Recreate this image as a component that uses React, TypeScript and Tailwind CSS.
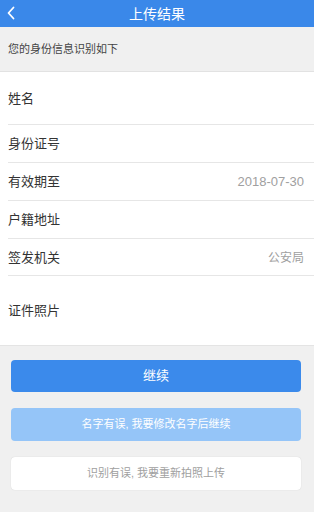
const rows: { label: string; value?: string; h: string }[] = [
  { label: '姓名', h: 'h-[53px]' },
  { label: '身份证号', h: 'h-[38px]' },
  { label: '有效期至', value: '2018-07-30', h: 'h-[38px]' },
  { label: '户籍地址', h: 'h-[38px]' },
  { label: '签发机关', value: '公安局', h: 'h-[37px]' },
  { label: '证件照片', h: 'h-[69px]' },
]

export default function App() {
  return (
    <div
      className="h-[512px] w-full flex flex-col overflow-hidden bg-[#f0f0f0]"
      style={{ fontFamily: '"Liberation Sans", "Noto Sans CJK SC", sans-serif' }}
    >
      {/* 顶部导航 */}
      <div className="h-[27px] flex-shrink-0 bg-[#3a88e9] relative flex items-center justify-center">
        <svg
          className="absolute left-[6px] top-[6px]"
          width="10"
          height="14"
          viewBox="0 0 10 14"
          fill="none"
        >
          <path d="M7.5 1.5L2.5 7l5 5.5" stroke="#fff" strokeWidth="1.8" strokeLinecap="round" strokeLinejoin="round" />
        </svg>
        <span className="text-white text-[14px] leading-none">上传结果</span>
      </div>

      {/* 提示 */}
      <div className="h-[45px] flex-shrink-0 flex items-center px-[8px] text-[11px] text-[#444] border-b border-[#e2e2e2]">
        您的身份信息识别如下
      </div>

      {/* 信息列表 */}
      <div className="bg-white flex-shrink-0">
        {rows.map((r, i) => (
          <div key={r.label} className="pl-[8px]">
            <div
              className={`${r.h} flex items-center justify-between pr-[10px] pt-[1px] ${
                i < rows.length - 1 ? 'border-b border-[#e6e6e6]' : ''
              }`}
            >
              <span className="text-[13px] text-[#333]">{r.label}</span>
              {r.value && (
                <span className={`${r.value === '公安局' ? 'text-[12px]' : 'text-[13px]'} text-[#a0a0a0]`}>
                  {r.value}
                </span>
              )}
            </div>
          </div>
        ))}
      </div>

      {/* 按钮 */}
      <div className="flex flex-col gap-[16px] pl-[11px] pr-[13px] pt-[14px] border-t border-[#e4e4e4]">
        <button className="h-[32px] rounded-[4px] bg-[#3b8aeb] text-white text-[13px]">继续</button>
        <button className="h-[33px] rounded-[4px] bg-[#95c5f8] text-white text-[11px]">
          名字有误, 我要修改名字后继续
        </button>
        <button className="h-[33px] rounded-[4px] bg-white text-[#a0a0a0] text-[11px] shadow-[0_0_1px_rgba(0,0,0,0.2)]">
          识别有误, 我要重新拍照上传
        </button>
      </div>
    </div>
  )
}
